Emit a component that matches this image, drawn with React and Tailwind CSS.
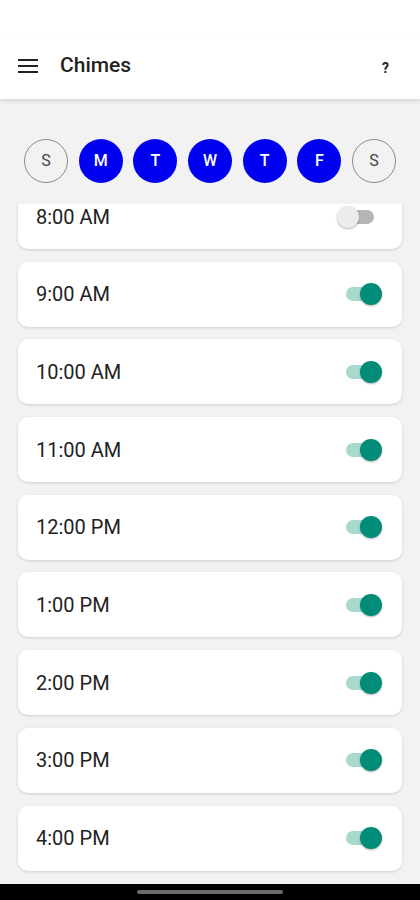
import { useState } from "react";

const DAYS = [
    { label: "S", on: false },
    { label: "M", on: true },
    { label: "T", on: true },
    { label: "W", on: true },
    { label: "T", on: true },
    { label: "F", on: true },
    { label: "S", on: false },
];

const CHIMES = [
    { time: "8:00 AM", on: false },
    { time: "9:00 AM", on: true },
    { time: "10:00 AM", on: true },
    { time: "11:00 AM", on: true },
    { time: "12:00 PM", on: true },
    { time: "1:00 PM", on: true },
    { time: "2:00 PM", on: true },
    { time: "3:00 PM", on: true },
    { time: "4:00 PM", on: true },
];

function Toggle({ on, onClick }) {
    return (
        <button onClick={onClick} className="relative w-[46px] h-[24px] flex items-center">
            <span className={`absolute left-[10px] right-[8px] h-[14px] rounded-full ${on ? "bg-[#a7d9cf]" : "bg-[#b5b5b5]"}`}></span>
            <span
                className={`absolute w-[22px] h-[22px] rounded-full shadow-[0_1px_2px_rgba(0,0,0,0.3)] ${on ? "right-[0px] bg-[#008c77]" : "left-[1px] bg-[#ececec]"}`}
            ></span>
        </button>
    );
}

export default function App() {
    const [chimes, setChimes] = useState(CHIMES);

    const flip = (i) => setChimes(chimes.map((c, j) => (j === i ? { ...c, on: !c.on } : c)));

    return (
        <div className="w-[420px] h-[900px] flex flex-col bg-[#f2f2f2] overflow-hidden font-['Roboto',sans-serif]">
            <div className="h-[33px] bg-white"></div>
            <header className="h-[66px] bg-white flex items-center pl-[18px] pr-[31px] shadow-[0_2px_4px_rgba(0,0,0,0.12)] relative z-10">
                <svg className="w-[20px] h-[14px] text-[#222]" viewBox="0 0 20 14" fill="currentColor">
                    <rect x="0" y="0" width="20" height="2" />
                    <rect x="0" y="6" width="20" height="2" />
                    <rect x="0" y="12" width="20" height="2" />
                </svg>
                <h1 className="ml-[22px] text-[21px] font-medium text-[#222] flex-1">Chimes</h1>
                <span className="text-[14px] font-bold text-[#222] mt-[4px]">?</span>
            </header>

            <div className="flex justify-between px-[24px] pt-[40px] pb-[21px]">
                {DAYS.map((d, i) => (
                    <div
                        key={i}
                        className={`w-[44px] h-[44px] rounded-full flex items-center justify-center text-[16px] ${
                            d.on ? "bg-[#0000f0] text-white font-medium" : "border border-[#8a8a8a] text-[#444]"
                        }`}
                    >
                        {d.label}
                    </div>
                ))}
            </div>

            <div className="flex-1 overflow-hidden px-[18px]">
                <div className="flex flex-col gap-[12.7px] mt-[-20px]">
                    {chimes.map((c, i) => (
                        <div
                            key={i}
                            className="h-[65px] shrink-0 bg-white rounded-[10px] shadow-[0_1px_3px_rgba(0,0,0,0.15)] flex items-center justify-between pl-[18px] pr-[20px]"
                        >
                            <span className="text-[20px] text-[#222]">{c.time}</span>
                            <Toggle on={c.on} onClick={() => flip(i)} />
                        </div>
                    ))}
                </div>
            </div>

            <div className="h-[16px] bg-black flex items-center justify-center">
                <div className="w-[146px] h-[4px] rounded-full bg-[#6b6b6b]"></div>
            </div>
        </div>
    );
}
